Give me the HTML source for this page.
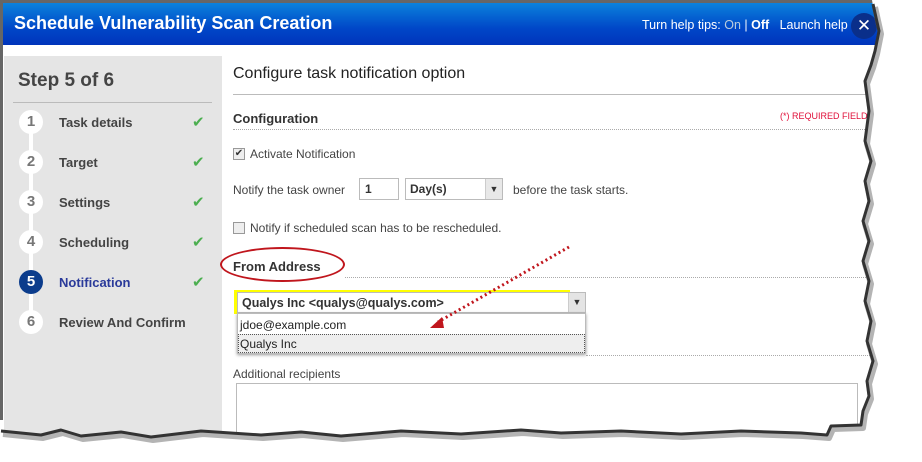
<!DOCTYPE html>
<html><head><meta charset="utf-8"><style>
*{margin:0;padding:0;box-sizing:border-box}
body{width:922px;height:462px;background:#fff;position:relative;overflow:hidden;font-family:"Liberation Sans","DejaVu Sans",sans-serif}
.a{position:absolute}
.hdr{left:3px;top:3px;width:880px;height:42px;background:linear-gradient(#0b82dc,#0047c8 60%,#0034bb);color:#fff}
.side{left:4px;top:56px;width:218px;height:400px;background:#e5e5e5}
.step{left:59px;font-size:13px;font-weight:bold;color:#444}
.circ{left:19px;width:24px;height:24px;border-radius:50%;background:#fff;color:#777;font-weight:bold;font-size:15px;text-align:center;line-height:24px}
.chk{left:192px;color:#4caf50;font-size:15px;font-weight:bold}
.t{font-size:12px;color:#444}
.dot{border-top:1px dotted #aaa;height:0}
</style></head><body>
<div class="a" style="left:0;top:0;width:3px;height:420px;background:#666"></div>
<div class="a" style="left:0;top:0;width:880px;height:3px;background:#666"></div>
<div class="a hdr">
<div class="a" style="left:11px;top:10px;font-size:18px;font-weight:bold">Schedule Vulnerability Scan Creation</div>
<div class="a" style="left:639px;top:15px;font-size:12.5px">Turn help tips: <span style="color:#bcd">On</span> | <b>Off</b> &nbsp; Launch help</div>
<div class="a" style="left:848px;top:10px;width:26px;height:26px;border-radius:50%;background:#0a2f8a;color:#fff;font-weight:bold;font-size:17px;text-align:center;line-height:26px">✕</div>
</div>
<div class="a side"></div>
<div class="a" style="left:18px;top:70px;font-size:19px;font-weight:bold;color:#444">Step 5 of 6</div>
<div class="a" style="left:13px;top:102px;width:199px;height:1px;background:#bbb"></div>
<div class="a" style="left:29px;top:122px;width:4px;height:200px;background:#fff"></div>
<div class="a circ" style="top:110px">1</div><div class="a step" style="top:115px">Task details</div><div class="a chk" style="top:113px">✔</div>
<div class="a circ" style="top:150px">2</div><div class="a step" style="top:155px">Target</div><div class="a chk" style="top:153px">✔</div>
<div class="a circ" style="top:190px">3</div><div class="a step" style="top:195px">Settings</div><div class="a chk" style="top:193px">✔</div>
<div class="a circ" style="top:230px">4</div><div class="a step" style="top:235px">Scheduling</div><div class="a chk" style="top:233px">✔</div>
<div class="a circ" style="top:270px;background:#0b3c8c;color:#fff">5</div><div class="a step" style="top:275px;color:#2a3a9a">Notification</div><div class="a chk" style="top:273px">✔</div>
<div class="a circ" style="top:310px">6</div><div class="a step" style="top:315px">Review And Confirm</div>

<div class="a" style="left:233px;top:65px;font-size:16px;color:#222">Configure task notification option</div>
<div class="a" style="left:233px;top:94px;width:640px;height:1px;background:#bbb"></div>
<div class="a" style="left:233px;top:111px;font-size:13px;font-weight:bold;color:#333">Configuration</div>
<div class="a" style="left:780px;top:111px;font-size:9px;color:#e0103a">(*) REQUIRED FIELDS</div>
<div class="a dot" style="left:233px;top:129px;width:640px"></div>
<div class="a" style="left:233px;top:148px;width:12px;height:12px;border:1px solid #999;background:#eee;font-size:10px;line-height:10px;text-align:center;color:#333">✔</div>
<div class="a t" style="left:250px;top:147px">Activate Notification</div>
<div class="a t" style="left:233px;top:183px">Notify the task owner</div>
<div class="a" style="left:359px;top:178px;width:40px;height:22px;border:1px solid #bbb;font-size:12px;font-weight:bold;padding:3px 5px;color:#333">1</div>
<div class="a" style="left:405px;top:178px;width:98px;height:22px;border:1px solid #bbb;font-size:12px;font-weight:bold;padding:3px 4px;color:#333">Day(s)<span class="a" style="right:0;top:0;width:17px;height:20px;background:#e8e8e8;border-left:1px solid #ccc;font-size:9px;text-align:center;line-height:20px">▼</span></div>
<div class="a t" style="left:513px;top:183px">before the task starts.</div>
<div class="a" style="left:233px;top:222px;width:12px;height:12px;border:1px solid #999;background:#eee"></div>
<div class="a t" style="left:250px;top:221px">Notify if scheduled scan has to be rescheduled.</div>
<div class="a" style="left:233px;top:259px;font-size:13px;font-weight:bold;color:#333">From Address</div>
<div class="a" style="left:220px;top:247px;width:125px;height:35px;border:2px solid #c0161d;border-radius:50%"></div>
<div class="a dot" style="left:345px;top:277px;width:525px"></div>
<div class="a" style="left:234px;top:290px;width:3px;height:24px;background:#ff0"></div>
<div class="a" style="left:234px;top:290px;width:336px;height:2px;background:#ff0"></div>
<div class="a" style="left:237px;top:292px;width:349px;height:21px;border:1px solid #bbb;font-size:12.5px;font-weight:bold;padding:3px 4px;color:#333">Qualys Inc &lt;qualys@qualys.com&gt;<span class="a" style="right:0;top:0;width:17px;height:19px;background:#e4e4e4;border-left:1px solid #ccc;font-size:9px;text-align:center;line-height:19px">▼</span></div>
<div class="a" style="left:237px;top:313px;width:349px;height:41px;border:1px solid #bbb;background:#fff;box-shadow:0 1px 3px #999"></div>
<div class="a t" style="left:240px;top:318px;color:#222">jdoe@example.com</div>
<div class="a" style="left:238px;top:334px;width:347px;height:19px;background:#eee;border:1px dotted #555"></div>
<div class="a t" style="left:240px;top:337px;color:#222">Qualys Inc</div>
<div class="a dot" style="left:586px;top:355px;width:284px"></div>
<div class="a t" style="left:233px;top:367px">Additional recipients</div>
<div class="a" style="left:236px;top:383px;width:622px;height:60px;border:1px solid #bbb"></div>
<svg class="a" style="left:0;top:0" width="922" height="462">
<line x1="569" y1="247" x2="438" y2="322" stroke="#c0161d" stroke-width="3" stroke-dasharray="2,3"/>
<polygon points="430,328 442,317 444,328" fill="#c0161d"/>
<path d="M872,0 L922,0 L922,462 L0,462 L0,430 L10,431 L40,434 L60,429 L80,435 L120,431 L150,436 L200,430 L260,434 L300,431 L340,435 L400,430 L460,433 L520,429 L560,432 L620,430 L680,433 L740,430 L800,432 L826,434 L830,425 L860,424 L862,410 L868,395 L866,380 L872,360 L866,340 L870,320 L864,300 L868,280 L862,260 L868,240 L862,220 L868,200 L864,180 L870,160 L864,140 L868,110 L864,80 L870,64 L874,50 L878,30 L874,12 Z" fill="#fff"/>
<g fill="none" stroke-linejoin="round">
<path id="e" d="M872,3 L874,12 L878,30 L874,50 L870,64 L864,80 L868,110 L864,140 L870,160 L864,180 L868,200 L862,220 L868,240 L862,260 L868,280 L864,300 L870,320 L866,340 L872,360 L866,380 L868,395 L862,410 L860,424 L830,425 L826,434 L800,432 L740,430 L680,433 L620,430 L560,432 L520,429 L460,433 L400,430 L340,435 L300,431 L260,434 L200,430 L150,436 L120,431 L80,435 L60,429 L40,434 L10,431 L0,430" stroke="#777" stroke-width="6" transform="translate(3,4)" opacity="0.55"/>
<path d="M872,3 L874,12 L878,30 L874,50 L870,64 L864,80 L868,110 L864,140 L870,160 L864,180 L868,200 L862,220 L868,240 L862,260 L868,280 L864,300 L870,320 L866,340 L872,360 L866,380 L868,395 L862,410 L860,424 L830,425 L826,434 L800,432 L740,430 L680,433 L620,430 L560,432 L520,429 L460,433 L400,430 L340,435 L300,431 L260,434 L200,430 L150,436 L120,431 L80,435 L60,429 L40,434 L10,431 L0,430" stroke="#333" stroke-width="3" transform="translate(1,1)"/>
</g>
</svg>
</body></html>
